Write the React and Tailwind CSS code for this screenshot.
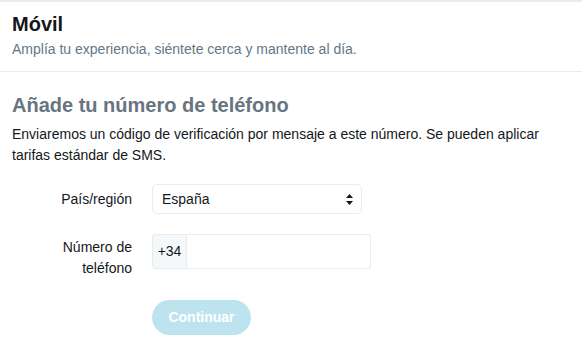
import React from 'react';

const font = { fontFamily: '"Liberation Sans", Arial, sans-serif' };

const App = () => {
  return (
    <div className="w-[582px] h-[346px] bg-white overflow-hidden text-[#14171a]" style={font}>
      {/* Top band */}
      <div className="h-[2px] bg-[#e6ecf0]" />

      {/* Header */}
      <div className="px-3 pt-[10px] pb-[12px] border-b border-[#e6ecf0]">
        <h1 className="text-[20px] leading-6 font-bold text-[#14171a]">Móvil</h1>
        <p className="text-[14px] leading-5 text-[#657786] mt-[3px]">
          Amplía tu experiencia, siéntete cerca y mantente al día.
        </p>
      </div>

      {/* Body */}
      <div className="px-3 pt-[21px]">
        <h2 className="text-[20px] leading-6 font-bold text-[#66757f]">Añade tu número de teléfono</h2>
        <p className="text-[14px] leading-[21px] mt-[7px]">
          Enviaremos un código de verificación por mensaje a este número. Se pueden aplicar tarifas estándar de SMS.
        </p>

        <div className="mt-[18px] flex flex-col gap-[20px]">
          {/* País */}
          <div className="flex items-center">
            <label className="w-[120px] text-right text-[14px] leading-5 text-[#14171a]">País/región</label>
            <div className="ml-[20px] relative w-[210px] h-[30px] border border-[#e6ecf0] rounded-[5px] flex items-center px-[9px] text-[14px]">
              <span>España</span>
              <svg className="absolute right-[8px] top-[9px]" width="7" height="11" viewBox="0 0 7 11">
                <path d="M3.5 0 L7 4 L0 4 Z" fill="#14171a" />
                <path d="M3.5 11 L7 7 L0 7 Z" fill="#14171a" />
              </svg>
            </div>
          </div>

          {/* Número */}
          <div className="flex items-start">
            <label className="w-[120px] text-right text-[14px] leading-[21px] text-[#14171a] pt-[3px]">
              Número de
              <br />
              teléfono
            </label>
            <div className="ml-[20px] flex h-[35px]">
              <div className="w-[35px] flex items-center justify-center bg-[#f5f8fa] border border-[#e6ecf0] rounded-l-[3px] text-[14px]">
                +34
              </div>
              <input
                className="w-[184px] border border-l-0 border-[#e6ecf0] rounded-r-[3px] outline-none px-2 text-[14px]"
                type="text"
              />
            </div>
          </div>

          {/* Botón */}
          <div className="flex">
            <div className="w-[140px]" />
            <button className="w-[99px] h-[35px] rounded-full bg-[#bde3ef] text-white font-bold text-[14px] mt-[1px]">
              Continuar
            </button>
          </div>
        </div>
      </div>
    </div>
  );
};

export default App;
